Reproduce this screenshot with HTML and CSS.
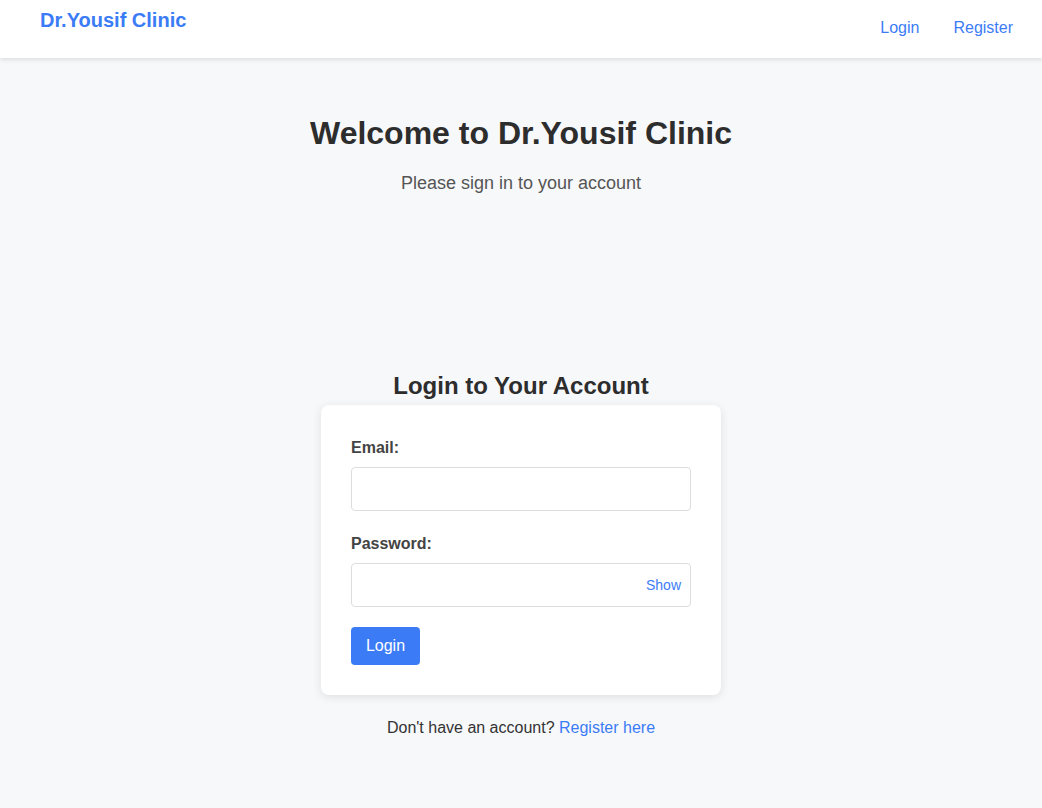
FILE: index.html
```html
<!DOCTYPE html>
<html lang="en">
<head>
<meta charset="utf-8">
<title>Dr.Yousif Clinic</title>
<link rel="stylesheet" href="styles.css">
</head>
<body>
<header class="topbar">
  <a class="brand" href="#">Dr.Yousif Clinic</a>
  <nav class="nav">
    <a href="#">Login</a>
    <a href="#">Register</a>
  </nav>
</header>
<main class="main">
  <h1 class="welcome">Welcome to Dr.Yousif Clinic</h1>
  <p class="subtitle">Please sign in to your account</p>
  <h2 class="form-title">Login to Your Account</h2>
  <form class="card">
    <label class="label" for="email">Email:</label>
    <input class="input" id="email" type="email">
    <label class="label label-gap" for="password">Password:</label>
    <div class="pw-wrap">
      <input class="input" id="password" type="password">
      <span class="show">Show</span>
    </div>
    <button class="btn" type="button">Login</button>
  </form>
  <p class="footer-note">Don't have an account? <a href="#">Register here</a></p>
</main>
</body>
</html>
```
FILE: styles.css
```css
* { box-sizing: border-box; }
html, body { margin: 0; padding: 0; }
body {
  font-family: "Liberation Sans", Arial, sans-serif;
  background: #f7f8fa;
  color: #333;
  min-height: 808px;
}
.topbar {
  height: 58px;
  background: #fff;
  box-shadow: 0 2px 4px rgba(0,0,0,0.1);
  display: flex;
  justify-content: space-between;
  align-items: flex-start;
  padding: 0 29px 0 40px;
}
.brand {
  font-size: 20px;
  font-weight: bold;
  color: #3b7cf6;
  text-decoration: none;
  line-height: 24px;
  margin-top: 8px;
}
.nav {
  display: flex;
  gap: 34px;
  margin-top: 18px;
}
.nav a {
  color: #3b7cf6;
  text-decoration: none;
  font-size: 16px;
  line-height: 20px;
}
.main {
  display: flex;
  flex-direction: column;
  align-items: center;
}
.welcome {
  margin: 57px 0 0;
  font-size: 32px;
  line-height: 36px;
  font-weight: bold;
  color: #2d2d2d;
}
.subtitle {
  margin: 20px 0 0;
  font-size: 18px;
  line-height: 24px;
  color: #555;
}
.form-title {
  margin: 177px 0 0;
  font-size: 24px;
  line-height: 28px;
  font-weight: bold;
  color: #2d2d2d;
}
.card {
  margin-top: 5px;
  width: 400px;
  background: #fff;
  border-radius: 8px;
  box-shadow: 0 2px 10px rgba(0,0,0,0.1);
  padding: 31px 30px 30px;
  display: flex;
  flex-direction: column;
  align-items: flex-start;
}
.label {
  font-size: 16px;
  line-height: 24px;
  font-weight: bold;
  color: #444;
  margin-bottom: 7px;
}
.label-gap { margin-top: 21px; }
.input {
  width: 340px;
  height: 44px;
  border: 1px solid #ddd;
  border-radius: 4px;
  background: #fff;
  font-size: 16px;
  padding: 0 10px;
  font-family: inherit;
}
.pw-wrap {
  position: relative;
  width: 340px;
}
.show {
  position: absolute;
  right: 10px;
  top: 0;
  height: 44px;
  display: flex;
  align-items: center;
  font-size: 14px;
  color: #3b7cf6;
}
.btn {
  margin-top: 20px;
  height: 38px;
  width: 69px;
  background: #3b7cf6;
  color: #fff;
  border: none;
  border-radius: 4px;
  font-size: 16px;
  font-family: inherit;
  padding: 0;
}
.footer-note {
  margin: 22px 0 0;
  font-size: 16px;
  line-height: 22px;
  color: #333;
}
.footer-note a {
  color: #3b7cf6;
  text-decoration: none;
}
```
